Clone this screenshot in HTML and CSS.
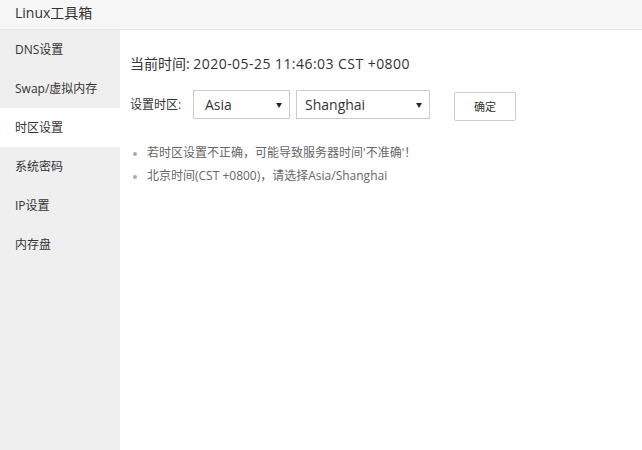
FILE: index.html
```html
<!DOCTYPE html>
<html>
<head>
<meta charset="utf-8">
<link rel="stylesheet" href="styles.css">
</head>
<body>
<div class="header">Linux工具箱</div>
<div class="main">
  <div class="sidebar">
    <div class="item">DNS设置</div>
    <div class="item">Swap/虚拟内存</div>
    <div class="item active">时区设置</div>
    <div class="item">系统密码</div>
    <div class="item">IP设置</div>
    <div class="item">内存盘</div>
  </div>
  <div class="content">
    <div class="now">当前时间: <span class="time">2020-05-25 11:46:03 CST +0800</span></div>
    <div class="form">
      <span class="label">设置时区:</span>
      <div class="select sel-a"><span>Asia</span><span class="arrow">▼</span></div>
      <div class="select sel-b"><span>Shanghai</span><span class="arrow">▼</span></div>
      <button class="btn">确定</button>
    </div>
    <ul class="tips">
      <li>若时区设置不正确，可能导致服务器时间'不准确'！</li>
      <li>北京时间(CST +0800)，请选择Asia/Shanghai</li>
    </ul>
  </div>
</div>
</body>
</html>
```
FILE: styles.css
```css
html, body { margin: 0; padding: 0; }
body {
  font-family: "Open Sans", "Noto Sans CJK SC", sans-serif;
  color: #333;
  width: 642px;
  height: 450px;
  overflow: hidden;
  background: #fff;
}
.header {
  height: 29px;
  line-height: 26px;
  background: #f7f7f7;
  border-bottom: 1px solid #e8e8e8;
  padding-left: 15px;
  font-size: 14px;
  color: #333;
}
.main { display: flex; height: 420px; }
.sidebar { width: 120px; background: #efefef; flex-shrink: 0; }
.item {
  height: 39px;
  line-height: 39px;
  padding-left: 15px;
  font-size: 12px;
  color: #333;
}
.item.active { background: #fff; }
.content { flex: 1; padding: 24px 0 0 10px; }
.now { font-size: 14px; line-height: 20px; color: #333; }
.time { letter-spacing: 0.45px; }
.form { display: flex; align-items: center; margin-top: 15px; height: 30px; }
.label { font-size: 12px; color: #333; width: 63px; }
.select {
  box-sizing: border-box;
  height: 29px;
  border: 1px solid #ccc;
  display: flex;
  align-items: center;
  justify-content: space-between;
  padding: 0 7px 0 11px;
  font-size: 14px;
  color: #333;
  background: #fff;
}
.sel-a { width: 97px; }
.sel-b { width: 134px; margin-left: 6px; padding-left: 8px; }
.arrow { font-size: 6px; color: #222; }
.btn {
  margin-left: 24px;
  width: 62px;
  height: 29px;
  margin-top: 4px;
  border: 1px solid #ccc;
  border-radius: 2px;
  background: #fff;
  font-family: "Open Sans", "Noto Sans CJK SC", sans-serif;
  font-size: 11px;
  color: #333;
  padding: 0;
}
.tips {
  margin: 22px 0 0 0;
  padding: 0 0 0 17px;
  font-size: 12px;
  color: #666;
}
.tips li { line-height: 23px; }
.tips li::marker { color: #aaa; font-size: 10px; }
```
